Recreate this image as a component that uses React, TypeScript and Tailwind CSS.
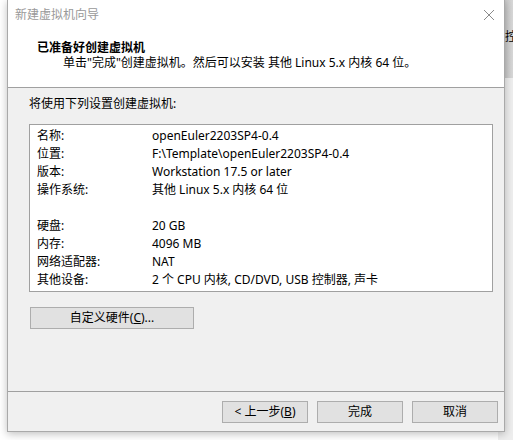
import React from "react";

const rows: [string, string][] = [
  ["名称:", "openEuler2203SP4-0.4"],
  ["位置:", "F:\\Template\\openEuler2203SP4-0.4"],
  ["版本:", "Workstation 17.5 or later"],
  ["操作系统:", "其他 Linux 5.x 内核 64 位"],
  ["", ""],
  ["硬盘:", "20 GB"],
  ["内存:", "4096 MB"],
  ["网络适配器:", "NAT"],
  ["其他设备:", "2 个 CPU 内核, CD/DVD, USB 控制器, 声卡"],
];

export default function App() {
  return (
    <div
      className="relative w-[513px] h-[440px] overflow-hidden bg-white text-[12px] text-black"
      style={{ fontFamily: '"Noto Sans", "Noto Sans CJK SC", sans-serif' }}
    >
      {/* background window on the right */}
      <div className="absolute left-[498px] top-0 w-[15px] h-[440px] bg-[#eeeeee]">
        <div className="h-[78px] bg-gradient-to-r from-[#b8b8b8] to-[#d8d8d8] pt-[30px] pl-[7px] leading-[14px]">
          控
        </div>
      </div>
      <div className="absolute left-[100px] top-0 w-[400px] h-[1px] bg-[#9a9a9a]" />

      {/* dialog window */}
      <div className="absolute left-[7px] top-0 w-[498px] h-[432px] flex flex-col bg-[#f0f0f0] border-x border-b border-[#a9a9a9] shadow-[0_2px_8px_rgba(0,0,0,0.25)]">
        {/* header */}
        <div className="h-[88px] bg-white border-b border-[#a0a0a0] flex flex-col">
          <div className="h-[30px] flex items-center justify-between pl-[7px] pr-[8px]">
            <span className="text-[#999999] leading-[16px]">新建虚拟机向导</span>
            <svg width="12" height="12" viewBox="0 0 12 12" className="mr-[1px]">
              <path d="M1 1 L11 11 M11 1 L1 11" stroke="#8a8a8a" strokeWidth="1" />
            </svg>
          </div>
          <div className="mt-[10px] pl-[29px] font-bold leading-[15px]">已准备好创建虚拟机</div>
          <div className="pl-[55px] leading-[15px]">
            单击"完成"创建虚拟机。然后可以安装 其他 Linux 5.x 内核 64 位。
          </div>
        </div>

        {/* body */}
        <div className="flex-1 flex flex-col pl-[21px] pr-[11px]">
          <div className="pt-[8px] leading-[16px]">将使用下列设置创建虚拟机:</div>
          <div className="mt-[12px] h-[168px] bg-white border border-[#a0a0a0] pt-[2px] pl-[7px]">
            {rows.map(([k, v], i) => (
              <div key={i} className="flex h-[18px] items-center leading-[18px]">
                <span className="w-[115px] shrink-0">{k}</span>
                <span className="whitespace-nowrap">{v}</span>
              </div>
            ))}
          </div>
          <div className="mt-[15px] ml-[1px] w-[164px] h-[22px] flex items-center justify-center bg-[#e1e1e1] border border-[#adadad] leading-[16px]">
            自定义硬件(<span className="underline">C</span>)...
          </div>
        </div>

        {/* footer */}
        <div className="h-[40px] border-t border-[#a0a0a0] flex justify-end gap-[9px] pt-[9px] pr-[6px]">
          <div className="w-[86px] h-[22px] flex items-center justify-center bg-[#e1e1e1] border border-[#adadad] leading-[16px]">
            &lt; 上一步(<span className="underline">B</span>)
          </div>
          <div className="w-[86px] h-[22px] flex items-center justify-center bg-[#e1e1e1] border border-[#adadad] leading-[16px]">
            完成
          </div>
          <div className="w-[86px] h-[22px] flex items-center justify-center bg-[#e1e1e1] border border-[#adadad] leading-[16px]">
            取消
          </div>
        </div>
      </div>
    </div>
  );
}
